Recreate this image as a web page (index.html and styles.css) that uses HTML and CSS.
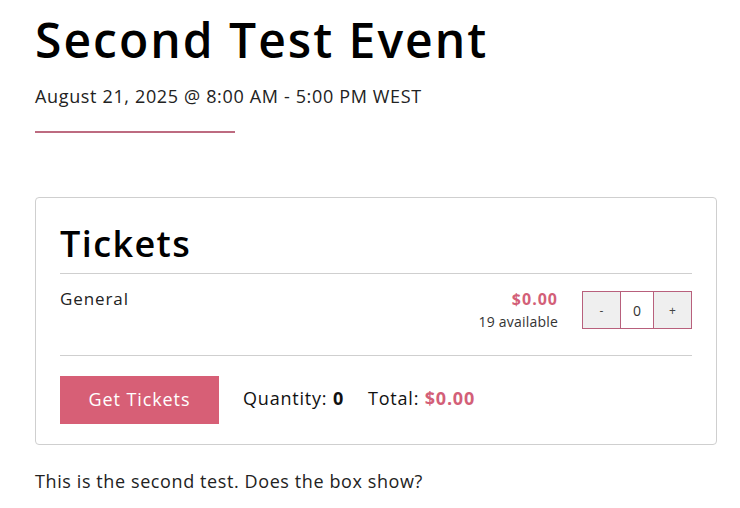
FILE: index.html
```html
<!DOCTYPE html>
<html lang="en">
<head>
<meta charset="utf-8">
<title>Second Test Event</title>
<link rel="stylesheet" href="styles.css">
</head>
<body>
<main class="page">
  <h1 class="title">Second Test Event</h1>
  <p class="date">August 21, 2025 @ 8:00 AM - 5:00 PM WEST</p>
  <div class="accent"></div>

  <section class="tickets">
    <h2 class="tickets-title">Tickets</h2>
    <div class="ticket-row">
      <div class="ticket-name">General</div>
      <div class="ticket-price">
        <div class="price">$0.00</div>
        <div class="avail">19 available</div>
      </div>
      <div class="qty">
        <button class="qty-btn" type="button">-</button>
        <span class="qty-val">0</span>
        <button class="qty-btn" type="button">+</button>
      </div>
    </div>
    <div class="ticket-footer">
      <button class="get-btn" type="button">Get Tickets</button>
      <span class="summary">Quantity: <b>0</b></span>
      <span class="summary">Total: <b class="pink">$0.00</b></span>
    </div>
  </section>

  <p class="desc">This is the second test. Does the box show?</p>
</main>
</body>
</html>
```

FILE: styles.css
```css
* { box-sizing: border-box; }
html, body { margin: 0; padding: 0; background: #fff; }
body {
  font-family: "Open Sans", "DejaVu Sans", sans-serif;
  color: #1a1a1a;
}
.page {
  padding: 8px 23px 0 35px;
}
.title {
  margin: 0;
  font-size: 48px;
  line-height: 64px;
  font-weight: 600;
  color: #000;
  letter-spacing: 2px;
}
.date {
  margin: 12px 0 0;
  font-size: 18px;
  line-height: 24px;
  color: #222;
  letter-spacing: 0.65px;
}
.accent {
  width: 200px;
  height: 2px;
  background: #bd6b80;
  margin-top: 23px;
}
.tickets {
  margin-top: 64px;
  border: 1px solid #cfcfcf;
  border-radius: 4px;
  padding: 22px 24px 20px;
}
.tickets-title {
  margin: 0;
  font-size: 36px;
  line-height: 48px;
  font-weight: 600;
  color: #000;
  letter-spacing: 1.4px;
  padding-bottom: 5px;
  border-bottom: 1px solid #cfcfcf;
}
.ticket-row {
  display: flex;
  align-items: flex-start;
  padding: 14px 0 23px;
  border-bottom: 1px solid #cfcfcf;
}
.ticket-name {
  flex: 1;
  font-size: 17px;
  line-height: 22px;
  color: #222;
  letter-spacing: 0.9px;
}
.ticket-price {
  text-align: right;
  margin-right: 24px;
}
.price {
  font-size: 16px;
  line-height: 22px;
  font-weight: 700;
  color: #d35f78;
  letter-spacing: 1px;
}
.avail {
  font-size: 14px;
  line-height: 20px;
  margin-top: 2px;
  color: #333;
  letter-spacing: 0.2px;
}
.qty {
  display: flex;
  margin-top: 3px;
  border: 1px solid #b8607c;
  height: 38px;
}
.qty-btn {
  width: 37px;
  border: 0;
  background: #efefef;
  font-family: inherit;
  font-size: 12px;
  color: #444;
  padding: 0;
}
.qty-val {
  width: 34px;
  border-left: 1px solid #b8607c;
  border-right: 1px solid #b8607c;
  display: flex;
  align-items: center;
  justify-content: center;
  font-size: 14px;
  color: #333;
}
.ticket-footer {
  display: flex;
  align-items: center;
  gap: 24px;
  padding-top: 20px;
}
.get-btn {
  width: 159px;
  height: 48px;
  border: 0;
  padding: 0 0 3px;
  background: #d75f76;
  color: #fff;
  font-family: inherit;
  font-size: 18px;
  font-weight: 500;
  letter-spacing: 0.9px;
}
.summary {
  font-size: 18px;
  color: #111;
  letter-spacing: 0.8px;
  padding-bottom: 4px;
}
.summary b { font-weight: 700; }
.pink { color: #d35f78; }
.desc {
  margin: 24px 0 0;
  font-size: 18px;
  line-height: 24px;
  color: #222;
  letter-spacing: 0.6px;
}
```
